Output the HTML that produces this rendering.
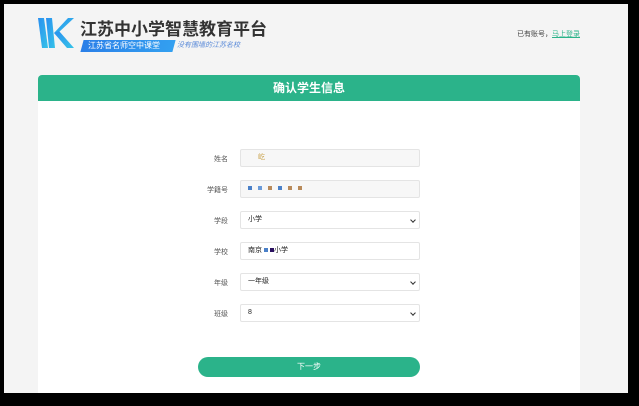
<!DOCTYPE html>
<html><head><meta charset="utf-8"><style>
*{box-sizing:border-box;margin:0;padding:0}
body{width:639px;height:406px;background:#000;font-family:"Liberation Sans","Noto Sans CJK SC",sans-serif;position:relative;overflow:hidden}
.page{position:absolute;left:4px;top:4px;width:624px;height:389px;background:#f4f4f4;overflow:hidden}
.abs{position:absolute}
.card{position:absolute;left:34px;top:71px;width:542px;height:330px;background:#fff;border-radius:4px 4px 0 0}
.hd{height:26px;background:#2bb38a;border-radius:4px 4px 0 0;color:#fff;font-size:12px;text-align:center;line-height:26px;font-weight:bold}
.lbl{position:absolute;left:150px;width:40px;text-align:right;font-size:7px;color:#555}
.inp{position:absolute;left:202px;width:180px;height:18px;border:1px solid #e4e4e4;border-radius:2px;font-size:7px;color:#222;line-height:16px;padding-left:7px}
.gray{background:#f7f7f7}
.chev{position:absolute;right:4px;top:6px;width:4px;height:4px;border-right:1.5px solid #333;border-bottom:1.5px solid #333;transform:rotate(45deg)}
.sq{display:inline-block;width:4px;height:4px;margin-right:6px;vertical-align:middle}
</style></head><body>
<div class="page">
 <svg class="abs" style="left:34px;top:11px" width="36" height="36" viewBox="0 0 36 36">
  <defs><linearGradient id="g" x1="0" y1="0" x2="1" y2="1"><stop offset="0" stop-color="#2a8ff0"/><stop offset="1" stop-color="#35c3e8"/></linearGradient></defs>
  <polygon points="0,3 6,3 10,33 4,33" fill="url(#g)"/>
  <polygon points="8,3 14,3 17,33 11,33" fill="url(#g)"/>
  <polygon points="30,3 36,3 20,18 16,18" fill="url(#g)"/>
  <polygon points="16,18 21,16 36,33 29,33" fill="url(#g)"/>
 </svg>
 <div class="abs" style="left:76px;top:11px;font-size:17px;font-weight:bold;color:#333">江苏中小学智慧教育平台</div>
 <div class="abs" style="left:78px;top:36px;width:92px;height:12px;background:linear-gradient(90deg,#2a7fe8,#33a0f0);transform:skewX(-15deg);"></div>
 <div class="abs" style="left:84px;top:36px;font-size:8px;line-height:12px;color:#fff">江苏省名师空中课堂</div>
 <div class="abs" style="left:173px;top:36px;font-size:7px;line-height:12px;color:#5a8ad8;font-style:italic">没有围墙的江苏名校</div>
 <div class="abs" style="left:513px;top:25px;font-size:7px;color:#444">已有账号，<span style="color:#2bb38a;text-decoration:underline">马上登录</span></div>
 <div class="card">
  <div class="hd">确认学生信息</div>
  <div class="lbl" style="top:79px">姓名</div><div class="inp gray" style="top:74px"><span style="margin-left:10px;color:#c9a24b">屹</span></div>
  <div class="lbl" style="top:110px">学籍号</div><div class="inp gray" style="top:105px"><span class="sq" style="background:#4a80c8"></span><span class="sq" style="background:#6a9ad8"></span><span class="sq" style="background:#b88a5a"></span><span class="sq" style="background:#4a80c8"></span><span class="sq" style="background:#b88a5a"></span><span class="sq" style="background:#b88a5a"></span></div>
  <div class="lbl" style="top:141px">学段</div><div class="inp" style="top:136px">小学<span class="chev"></span></div>
  <div class="lbl" style="top:172px">学校</div><div class="inp" style="top:167px">南京 <span class="sq" style="background:#4a80c8;margin-right:2px"></span><span class="sq" style="background:#2a1060;margin-right:0"></span>小学</div>
  <div class="lbl" style="top:203px">年级</div><div class="inp" style="top:198px">一年级<span class="chev"></span></div>
  <div class="lbl" style="top:234px">班级</div><div class="inp" style="top:229px">8<span class="chev"></span></div>
  <div class="abs" style="left:160px;top:282px;width:222px;height:20px;background:#2bb38a;border-radius:10px;color:#fff;font-size:8px;text-align:center;line-height:20px">下一步</div>
 </div>
</div>
</body></html>
